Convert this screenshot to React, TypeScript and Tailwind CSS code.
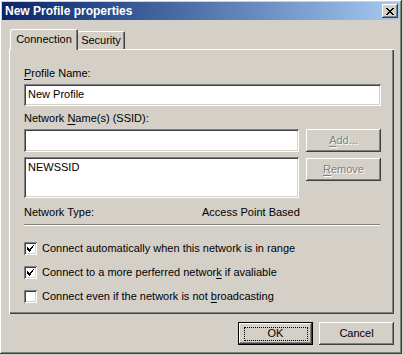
import type { ReactNode } from 'react';

const raised =
  'shadow-[inset_-1px_-1px_#404040,inset_1px_1px_#ffffff,inset_-2px_-2px_#808080,inset_2px_2px_#d4d0c8]';
const sunken =
  'shadow-[inset_1px_1px_#808080,inset_-1px_-1px_#ffffff,inset_2px_2px_#404040,inset_-2px_-2px_#d4d0c8]';

function Key({ children }: { children: ReactNode }) {
  return <span className="underline underline-offset-2">{children}</span>;
}

function Field({ value, className }: { value?: string; className: string }) {
  return (
    <div className={`bg-white ${sunken} px-[4px] pt-[4px] leading-[13px] ${className}`}>
      {value}
    </div>
  );
}

function DisabledButton({ children }: { children: ReactNode }) {
  return (
    <div
      className={`w-[75px] h-[23px] ${raised} flex items-center justify-center text-[#808080] [text-shadow:1px_1px_#ffffff]`}
    >
      {children}
    </div>
  );
}

function Check({ checked, children }: { checked: boolean; children: ReactNode }) {
  return (
    <div className="flex items-center h-[13px] gap-[5px]">
      <div className={`w-[13px] h-[13px] bg-white ${sunken} flex items-center justify-center`}>
        {checked && (
          <svg width="7" height="7" viewBox="0 0 7 7" shapeRendering="crispEdges">
            <path
              d="M0 2h1v1H0zM0 3h2v1H0zM0 4h3v1H0zM1 5h3v1H1zM2 6h1v1H2zM3 4h1v1H3zM3 3h2v1H3zM4 2h2v1H4zM5 1h1v1H5zM6 0h1v1H6z"
              fill="#000"
            />
          </svg>
        )}
      </div>
      <span>{children}</span>
    </div>
  );
}

export default function App() {
  return (
    <div
      className="w-[404px] h-[355px] bg-[#d4d0c8] text-black text-[11px] leading-[13px] overflow-hidden"
      style={{ fontFamily: '"Liberation Sans", Arial, sans-serif' }}
    >
      <div className="w-[402px] h-[354px] pt-[2px] pl-[2px] pr-[2px] shadow-[inset_-1px_-1px_#404040,inset_1px_1px_#ffffff,inset_-2px_-2px_#808080] flex flex-col">
        {/* title bar */}
        <div className="h-[18px] bg-gradient-to-r from-[#0a246a] to-[#a6caf0] flex items-center justify-between pl-[3px] pr-[2px]">
          <span className="text-white font-bold text-[12px]">New Profile properties</span>
          <div className={`w-[16px] h-[14px] bg-[#d4d0c8] ${raised} flex items-center justify-center`}>
            <svg width="8" height="7" viewBox="0 0 8 7" shapeRendering="crispEdges">
              <path d="M0 0h2v1H0zM6 0h2v1H6zM1 1h2v1H1zM5 1h2v1H5zM2 2h4v1H2zM3 3h2v1H3zM2 4h4v1H2zM1 5h2v1H1zM5 5h2v1H5zM0 6h2v1H0zM6 6h2v1H6z" fill="#000" />
            </svg>
          </div>
        </div>

        {/* tabs */}
        <div className="flex items-end pl-[8px] mt-[8px] h-[21px] relative z-10">
          <div className="w-[68px] h-[21px] shadow-[inset_1px_1px_#ffffff,inset_-1px_0_#404040,inset_-2px_0_#808080] bg-[#d4d0c8] rounded-t-[2px] flex items-center justify-center pb-[1px] -mb-[1px] relative">
            Connection
          </div>
          <div className="w-[48px] h-[18px] shadow-[inset_1px_1px_#ffffff,inset_-1px_0_#404040,inset_-2px_0_#808080] rounded-t-[2px] flex items-center justify-center -ml-[1px]">
            Security
          </div>
        </div>

        {/* tab panel */}
        <div className="ml-[7px] w-[385px] h-[265px] shadow-[inset_1px_1px_#ffffff,inset_-1px_-1px_#404040,inset_-2px_-2px_#808080] pl-[15px] pr-[13px] pt-[18px] flex flex-col">
          <div>
            <Key>P</Key>rofile Name:
          </div>
          <Field value="New Profile" className="mt-[4px] h-[22px] w-[357px]" />

          <div className="mt-[6px]">
            Network <Key>N</Key>ame(s) (SSID):
          </div>
          <div className="mt-[4px] flex gap-[7px]">
            <div className="flex flex-col gap-[5px]">
              <Field className="h-[23px] w-[275px]" />
              <Field value="NEWSSID" className="h-[41px] w-[275px]" />
            </div>
            <div className="flex flex-col gap-[6px]">
              <DisabledButton>
                <Key>A</Key>dd...
              </DisabledButton>
              <DisabledButton>
                <Key>R</Key>emove
              </DisabledButton>
            </div>
          </div>

          <div className="mt-[8px] flex">
            <span className="w-[178px]">Network Type:</span>
            <span>Access Point Based</span>
          </div>
          <div className="mt-[5px] w-[356px] h-[2px] border-t border-[#808080] border-b border-b-white" />

          <div className="mt-[16px] flex flex-col gap-[11px]">
            <Check checked>Connect automatically when this network is in range</Check>
            <Check checked>
              Connect to a more perferred networ<Key>k</Key> if avaliable
            </Check>
            <Check checked={false}>
              Connect even if the network is not <Key>b</Key>roadcasting
            </Check>
          </div>
        </div>

        {/* buttons */}
        <div className="mt-[8px] flex justify-end gap-[6px] pr-[6px]">
          <div className="w-[75px] h-[23px] border border-black shadow-[inset_-1px_-1px_#404040,inset_1px_1px_#ffffff,inset_-2px_-2px_#808080] flex items-center justify-center">
            <div className="w-[64px] h-[14px] border border-dotted border-black flex items-center justify-center">
              OK
            </div>
          </div>
          <div className={`w-[75px] h-[23px] ${raised} flex items-center justify-center`}>Cancel</div>
        </div>
      </div>
    </div>
  );
}
